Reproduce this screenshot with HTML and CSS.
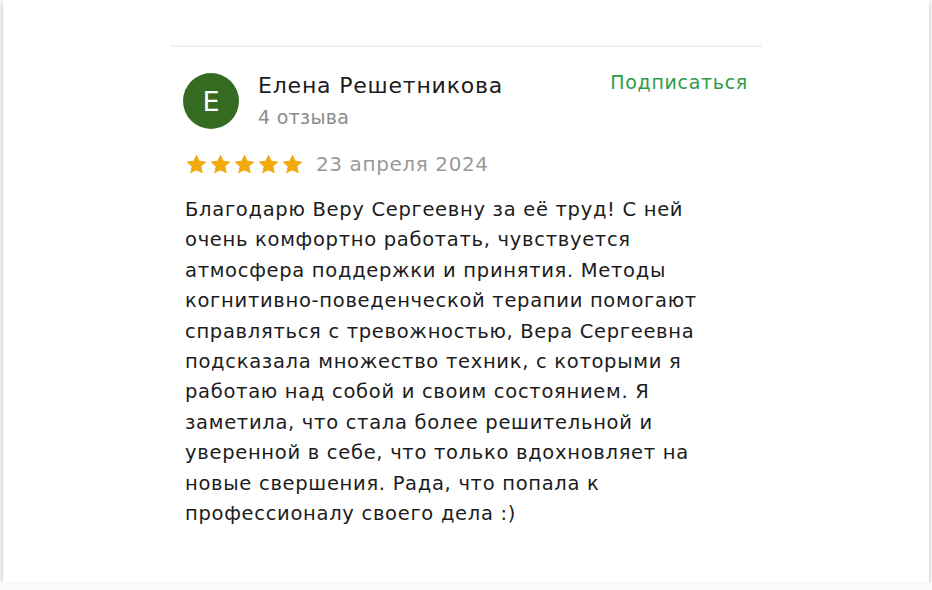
FILE: index.html
```html
<!DOCTYPE html>
<html lang="ru">
<head>
    <meta charset="UTF-8">
    <meta name="viewport" content="width=device-width, initial-scale=1.0">
    <title>Отзыв</title>
    <link rel="stylesheet" href="styles.css">
</head>
<body>
    <div class="card">
        <div class="review">
            <div class="review-head">
                <div class="avatar">Е</div>
                <div class="author">
                    <div class="author-name">Елена Решетникова</div>
                    <div class="author-count">4 отзыва</div>
                </div>
                <a class="subscribe" href="#">Подписаться</a>
            </div>

            <div class="meta">
                <div class="stars">
                    <svg viewBox="0 0 24 24"><path d="M12 1.5l3.2 6.7 7.3.9-5.4 5.1 1.4 7.3L12 17.9l-6.5 3.6 1.4-7.3-5.4-5.1 7.3-.9z"/></svg>
                    <svg viewBox="0 0 24 24"><path d="M12 1.5l3.2 6.7 7.3.9-5.4 5.1 1.4 7.3L12 17.9l-6.5 3.6 1.4-7.3-5.4-5.1 7.3-.9z"/></svg>
                    <svg viewBox="0 0 24 24"><path d="M12 1.5l3.2 6.7 7.3.9-5.4 5.1 1.4 7.3L12 17.9l-6.5 3.6 1.4-7.3-5.4-5.1 7.3-.9z"/></svg>
                    <svg viewBox="0 0 24 24"><path d="M12 1.5l3.2 6.7 7.3.9-5.4 5.1 1.4 7.3L12 17.9l-6.5 3.6 1.4-7.3-5.4-5.1 7.3-.9z"/></svg>
                    <svg viewBox="0 0 24 24"><path d="M12 1.5l3.2 6.7 7.3.9-5.4 5.1 1.4 7.3L12 17.9l-6.5 3.6 1.4-7.3-5.4-5.1 7.3-.9z"/></svg>
                </div>
                <span class="date">23 апреля 2024</span>
            </div>

            <p class="text">Благодарю Веру Сергеевну за её труд! С ней очень комфортно работать, чувствуется атмосфера поддержки и принятия. Методы когнитивно-поведенческой терапии помогают справляться с тревожностью, Вера Сергеевна подсказала множество техник, с которыми я работаю над собой и своим состоянием. Я заметила, что стала более решительной и уверенной в себе, что только вдохновляет на новые свершения. Рада, что попала к профессионалу своего дела :)</p>
        </div>
    </div>
</body>
</html>
```

FILE: styles.css
```css
body {
    margin: 0;
    background: #fafafa;
    font-family: 'DejaVu Sans', 'Noto Sans', sans-serif;
    color: #1c1c1c;
}
.card {
    margin: 0 3px;
    height: 582px;
    background: white;
    box-shadow: 0 3px 5px rgba(0,0,0,0.28);
    padding-top: 45px;
    box-sizing: border-box;
}
.review {
    width: 592px;
    margin-left: 167px;
    border-top: 2px solid #f0f0f0;
}
.review-head {
    display: flex;
    align-items: flex-start;
    padding: 26px 14px 0 13px;
}
.avatar {
    width: 56px;
    height: 56px;
    border-radius: 50%;
    background: #356b21;
    color: white;
    font-size: 27px;
    display: flex;
    align-items: center;
    justify-content: center;
    flex-shrink: 0;
}
.author {
    margin-left: 19px;
    flex: 1;
}
.author-name {
    font-size: 22px;
    line-height: 26px;
    letter-spacing: 0.8px;
}
.author-count {
    font-size: 19px;
    line-height: 24px;
    letter-spacing: 0.3px;
    margin-top: 6px;
    color: #8c8c8c;
}
.subscribe {
    font-size: 19px;
    line-height: 26px;
    letter-spacing: 0.7px;
    color: #2c9c47;
    text-decoration: none;
    margin-top: -4px;
}
.meta {
    display: flex;
    align-items: center;
    padding-left: 15px;
    margin-top: 23px;
}
.stars {
    display: flex;
    gap: 1px;
}
.stars svg {
    width: 23px;
    height: 23px;
    fill: #f2ab0c;
}
.date {
    margin-left: 12px;
    font-size: 20px;
    letter-spacing: 0.6px;
    color: #999;
}
.text {
    margin: 19px 0 0;
    padding-left: 15px;
    padding-right: 37px;
    font-size: 19.5px;
    letter-spacing: 0.7px;
    line-height: 30.4px;
}
```
